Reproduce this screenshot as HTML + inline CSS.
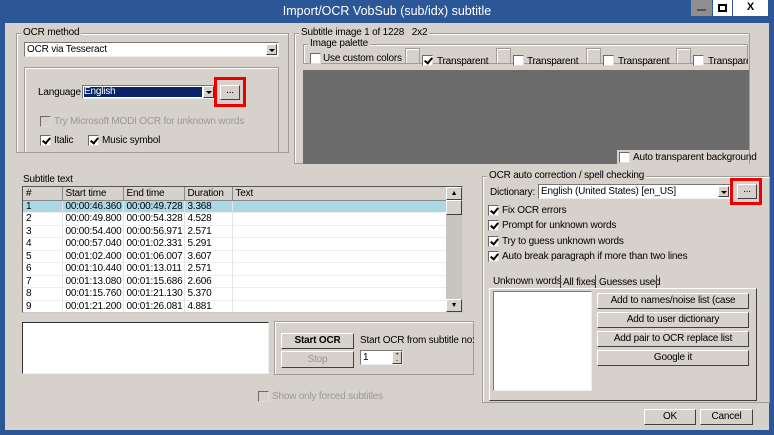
<!DOCTYPE html>
<html><head><meta charset="utf-8"><style>
*{box-sizing:border-box;margin:0;padding:0}
body{width:774px;height:435px;background:#2b5797;font-family:"Liberation Sans",sans-serif;font-size:10px;letter-spacing:-0.2px;color:#000;position:relative;overflow:hidden}
.a{position:absolute}
.client{position:absolute;left:5px;top:23px;width:764px;height:407px;background:#d6d1cb}
.grp{position:absolute;border:1px solid #a09c97;box-shadow:inset 1px 1px 0 #fff}
.gl{position:absolute;background:#d6d1cb;padding:0 2px;top:-7px;left:4px;white-space:nowrap}
.tb{position:absolute;background:#fff;border:1px solid #7a7772;border-right-color:#eee;border-bottom-color:#eee}
.cb{position:absolute;width:11px;height:11px;background:#fff;border:1px solid #6d6a66;border-right-color:#ddd;border-bottom-color:#ddd}
.cb.k::after{content:"";position:absolute;left:3px;top:0px;width:3px;height:6px;border:solid #000;border-width:0 2px 2px 0;transform:rotate(40deg)}
.t{position:absolute;white-space:nowrap}
.btn{position:absolute;background:#d6d1cb;border:1px solid #fff;border-right-color:#404040;border-bottom-color:#404040;text-align:center;white-space:nowrap}
.dd{position:absolute;width:11px;background:#d6d1cb;border:1px solid #fff;border-right-color:#404040;border-bottom-color:#404040}
.dd::after{content:"";position:absolute;left:2px;top:4px;border:3px solid transparent;border-top:3px solid #000;border-bottom:0}
.red{position:absolute;border:3px solid #ee0000}
table{border-collapse:collapse;table-layout:fixed}
td{padding-left:3px;overflow:hidden;white-space:nowrap;height:12.5px;line-height:11px}
tbody td+td{border-left:1px solid #e6e6e6}
tbody tr{border-bottom:1px solid #eee}
</style></head><body>
<div class="t" style="left:0;width:774px;top:4px;text-align:center;color:#fff;font-size:12.5px;letter-spacing:0">Import/OCR VobSub (sub/idx) subtitle</div>
<div class="a" style="left:691px;top:0;width:21px;height:16px;background:#8e8e8e"><div class="a" style="left:6px;top:9px;width:9px;height:2px;background:#555"></div></div>
<div class="a" style="left:713px;top:0;width:19px;height:16px;background:#fff"><div class="a" style="left:5px;top:4px;width:9px;height:8px;border:2px solid #000"></div></div>
<div class="a" style="left:733px;top:0;width:35px;height:16px;background:#fff;font-weight:bold;text-align:center;font-size:11px;line-height:15px">X</div>
<div class="client">
<div style="position:absolute;left:-5px;top:-23px">
<div class="grp" style="left:16px;top:33px;width:273px;height:120px"><div class="gl">OCR method</div></div>
<div class="tb" style="left:24px;top:42px;width:255px;height:15px"><span class="t" style="left:2px;top:1px">OCR via Tesseract</span><div class="dd" style="right:1px;top:1px;height:11px"></div></div>
<div class="grp" style="left:24px;top:67px;width:255px;height:86px"></div>
<div class="t" style="left:38px;top:87px">Language</div>
<div class="tb" style="left:82px;top:85px;width:134px;height:14px"><div class="a" style="left:1px;top:1px;right:13px;height:10px;background:#0a246a;color:#fff;line-height:10px">English</div><div class="dd" style="right:1px;top:0px;height:12px"></div></div>
<div class="btn" style="left:220px;top:85px;width:20px;height:15px;line-height:10px">...</div>
<div class="red" style="left:214px;top:77px;width:32px;height:30px"></div>
<div class="cb" style="left:40px;top:116px;background:#d6d1cb"></div>
<div class="t" style="left:54px;top:116px;color:#999">Try Microsoft MODI OCR for unknown words</div>
<div class="cb k" style="left:40px;top:135px"></div><div class="t" style="left:54px;top:135px">Italic</div>
<div class="cb k" style="left:88px;top:135px"></div><div class="t" style="left:102px;top:135px">Music symbol</div>
<div class="grp" style="left:294px;top:33px;width:456px;height:131px"><div class="gl">Subtitle image 1 of 1228 &nbsp; 2x2</div></div>
<div class="grp" style="left:303px;top:44px;width:445px;height:20px"><div class="gl">Image palette</div></div>
<div class="cb" style="left:310px;top:53px"></div><div class="t" style="left:323px;top:53px">Use custom colors</div>
<div class="grp" style="left:405px;top:48px;width:15px;height:16px"></div><div class="cb k" style="left:422px;top:55px"></div><div class="t" style="left:437px;top:56px">Transparent</div>
<div class="grp" style="left:496px;top:48px;width:15px;height:16px"></div><div class="cb" style="left:513px;top:55px"></div><div class="t" style="left:527px;top:56px">Transparent</div>
<div class="grp" style="left:586px;top:48px;width:15px;height:16px"></div><div class="cb" style="left:603px;top:55px"></div><div class="t" style="left:618px;top:56px">Transparent</div>
<div class="grp" style="left:676px;top:48px;width:15px;height:16px"></div><div class="cb" style="left:693px;top:55px"></div><div class="t" style="left:708px;top:56px;width:40px;overflow:hidden">Transparent</div>
<div class="a" style="left:303px;top:70px;width:446px;height:94px;background:#6b6b6b"></div>
<div class="a" style="left:617px;top:150px;width:132px;height:14px;background:#d6d1cb"></div>
<div class="cb" style="left:619px;top:152px"></div><div class="t" style="left:633px;top:152px">Auto transparent background</div>
<div class="t" style="left:23px;top:174px">Subtitle text</div>
<div class="a" style="left:22px;top:186px;width:441px;height:127px;background:#fff;border:1px solid #555;border-right-color:#ccc;border-bottom-color:#ccc;overflow:hidden">
<table style="width:423px">
<colgroup><col style="width:39px"><col style="width:61px"><col style="width:61px"><col style="width:48px"><col></colgroup>
<thead><tr style="background:#d6d1cb"><td style="border-right:1px solid #888;border-bottom:1px solid #888;height:13px">#</td><td style="border-right:1px solid #888;border-bottom:1px solid #888">Start time</td><td style="border-right:1px solid #888;border-bottom:1px solid #888">End time</td><td style="border-right:1px solid #888;border-bottom:1px solid #888">Duration</td><td style="border-bottom:1px solid #888">Text</td></tr></thead>
<tbody>
<tr style="background:#acd8e6"><td>1</td><td>00:00:46.360</td><td>00:00:49.728</td><td>3.368</td><td></td></tr>
<tr><td>2</td><td>00:00:49.800</td><td>00:00:54.328</td><td>4.528</td><td></td></tr>
<tr><td>3</td><td>00:00:54.400</td><td>00:00:56.971</td><td>2.571</td><td></td></tr>
<tr><td>4</td><td>00:00:57.040</td><td>00:01:02.331</td><td>5.291</td><td></td></tr>
<tr><td>5</td><td>00:01:02.400</td><td>00:01:06.007</td><td>3.607</td><td></td></tr>
<tr><td>6</td><td>00:01:10.440</td><td>00:01:13.011</td><td>2.571</td><td></td></tr>
<tr><td>7</td><td>00:01:13.080</td><td>00:01:15.686</td><td>2.606</td><td></td></tr>
<tr><td>8</td><td>00:01:15.760</td><td>00:01:21.130</td><td>5.370</td><td></td></tr>
<tr><td>9</td><td>00:01:21.200</td><td>00:01:26.081</td><td>4.881</td><td></td></tr>
</tbody></table>
<div class="a" style="right:0;top:0;width:16px;height:125px;background:#c8c4bf"></div>
<div class="btn" style="right:0;top:0;width:16px;height:13px;font-size:7px;line-height:11px">▲</div>
<div class="btn" style="right:0;top:13px;width:16px;height:15px"></div>
<div class="btn" style="right:0;bottom:0;width:16px;height:13px;font-size:7px;line-height:11px">▼</div>
</div>
<div class="tb" style="left:22px;top:322px;width:247px;height:52px;border-color:#333 #eee #eee #333"></div>
<div class="grp" style="left:274px;top:321px;width:200px;height:54px"></div>
<div class="btn" style="left:281px;top:333px;width:73px;height:16px;font-weight:bold;line-height:14px">Start OCR</div>
<div class="btn" style="left:281px;top:351px;width:73px;height:17px;color:#999;line-height:15px">Stop</div>
<div class="t" style="left:360px;top:335px">Start OCR from subtitle no:</div>
<div class="tb" style="left:360px;top:350px;width:43px;height:15px"><span class="t" style="left:2px;top:1px">1</span><div class="btn" style="right:0;top:0;width:10px;height:13px;font-size:6px;line-height:6px">+<br>-</div></div>
<div class="cb" style="left:258px;top:391px;background:#d6d1cb"></div>
<div class="t" style="left:272px;top:391px;color:#999">Show only forced subtitles</div>
<div class="grp" style="left:482px;top:176px;width:288px;height:227px"><div class="gl">OCR auto correction / spell checking</div></div>
<div class="t" style="left:490px;top:187px">Dictionary:</div>
<div class="tb" style="left:538px;top:184px;width:193px;height:15px"><span class="t" style="left:2px;top:1px">English (United States) [en_US]</span><div class="dd" style="right:1px;top:1px;height:11px"></div></div>
<div class="btn" style="left:737px;top:184px;width:20px;height:15px;line-height:10px">...</div>
<div class="red" style="left:730px;top:178px;width:32px;height:27px"></div>
<div class="cb k" style="left:488px;top:205px"></div><div class="t" style="left:502px;top:205px">Fix OCR errors</div>
<div class="cb k" style="left:488px;top:220px"></div><div class="t" style="left:502px;top:220px">Prompt for unknown words</div>
<div class="cb k" style="left:488px;top:236px"></div><div class="t" style="left:502px;top:236px">Try to guess unknown words</div>
<div class="cb k" style="left:488px;top:251px"></div><div class="t" style="left:502px;top:251px">Auto break paragraph if more than two lines</div>
<div class="a" style="left:489px;top:288px;width:268px;height:113px;border:1px solid #fff;border-right-color:#404040;border-bottom-color:#404040"></div>
<div class="t" style="left:493px;top:276px">Unknown words</div>
<div class="a" style="left:560px;top:275px;width:1px;height:13px;background:#404040"></div>
<div class="t" style="left:563px;top:277px">All fixes</div>
<div class="a" style="left:595px;top:275px;width:1px;height:13px;background:#404040"></div>
<div class="t" style="left:599px;top:277px">Guesses used</div>
<div class="a" style="left:656px;top:275px;width:1px;height:13px;background:#404040"></div>
<div class="tb" style="left:493px;top:291px;width:99px;height:100px"></div>
<div class="btn" style="left:597px;top:293px;width:152px;height:16px;line-height:14px">Add to names/noise list (case</div>
<div class="btn" style="left:597px;top:312px;width:152px;height:16px;line-height:14px">Add to user dictionary</div>
<div class="btn" style="left:597px;top:331px;width:152px;height:16px;line-height:14px">Add pair to OCR replace list</div>
<div class="btn" style="left:597px;top:350px;width:152px;height:16px;line-height:14px">Google it</div>
<div class="btn" style="left:644px;top:409px;width:52px;height:16px;line-height:14px">OK</div>
<div class="btn" style="left:700px;top:409px;width:53px;height:16px;line-height:14px">Cancel</div>
</div>
</div>
</body></html>
